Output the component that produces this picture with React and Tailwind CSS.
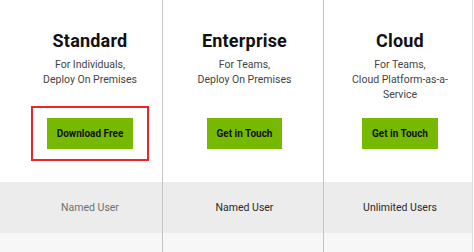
export default function App() {
  const font = { fontFamily: "Roboto, 'Liberation Sans', sans-serif" };
  const cols = [
    {
      title: "Standard",
      desc: ["For Individuals,", "Deploy On Premises"],
      btn: "Download Free",
      band: "Named User",
      bandColor: "text-[#6f6f6f]",
      highlight: true,
      outer: "w-[163px] border-r border-[#c4c4c4]",
      inner: "pl-[18px]",
    },
    {
      title: "Enterprise",
      desc: ["For Teams,", "Deploy On Premises"],
      btn: "Get in Touch",
      band: "Named User",
      bandColor: "text-[#2a2a2a]",
      highlight: false,
      outer: "w-[161px] border-r border-[#c4c4c4]",
      inner: "pl-[3px]",
    },
    {
      title: "Cloud",
      desc: ["For Teams,", "Cloud Platform-as-a-", "Service"],
      btn: "Get in Touch",
      band: "Unlimited Users",
      bandColor: "text-[#2a2a2a]",
      highlight: false,
      outer: "w-[149px] border-r border-[#dedede]",
      inner: "pl-[4px]",
    },
  ];
  return (
    <div className="w-[474px] h-[252px] bg-white flex overflow-hidden" style={font}>
      {cols.map((c, i) => (
        <div key={i} className={`${c.outer} h-[252px] flex flex-col shrink-0`}>
          <div className={`${c.inner} flex flex-col items-center pt-[30px] h-[182px]`}>
            <div className="text-[18px] leading-[22px] font-bold text-[#111] tracking-[0.2px]">{c.title}</div>
            <div className="mt-[5px] h-[45px] text-[10.5px] leading-[15px] text-[#444] text-center">
              {c.desc.map((d, j) => (
                <div key={j}>{d}</div>
              ))}
            </div>
            <div
              className={`mt-[4px] px-[14px] py-[10px] border-2 ${
                c.highlight ? "border-[#e8262c]" : "border-transparent"
              }`}
            >
              <div className="h-[31px] px-[10px] flex items-center bg-[#76b900] text-[10px] font-bold text-[#111] whitespace-nowrap">
                {c.btn}
              </div>
            </div>
          </div>
          <div className={`${c.inner} h-[51px] bg-[#ececec] flex items-center justify-center`}>
            <span className={`text-[10.5px] ${c.bandColor}`}>{c.band}</span>
          </div>
          <div className="flex-1 bg-[#f7f7f7]"></div>
        </div>
      ))}
      <div className="flex-1 bg-white"></div>
    </div>
  );
}
